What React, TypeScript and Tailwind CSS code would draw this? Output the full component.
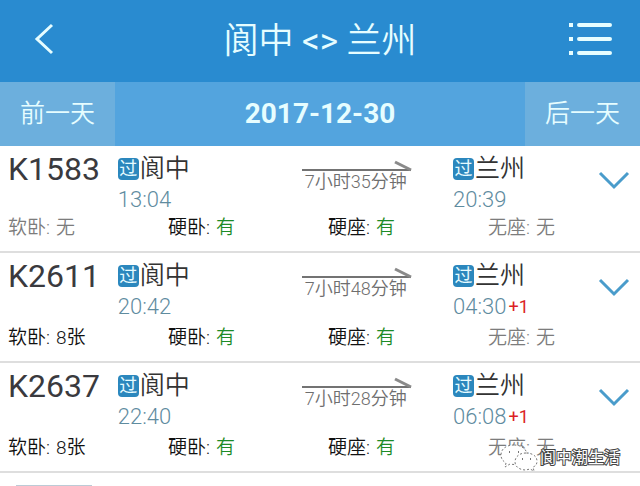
import { useState } from "react";

type Seat = {
  label: string;
  value: string;
  status: "none" | "many" | "few";
};

type Train = {
  code: string;
  depart: string;
  arrive: string;
  nextDay?: boolean;
  duration: string;
  seats: Seat[];
};

const trains: Train[] = [
  {
    code: "K1583",
    depart: "13:04",
    arrive: "20:39",
    duration: "7小时35分钟",
    seats: [
      { label: "软卧", value: "无", status: "none" },
      { label: "硬卧", value: "有", status: "many" },
      { label: "硬座", value: "有", status: "many" },
      { label: "无座", value: "无", status: "none" },
    ],
  },
  {
    code: "K2611",
    depart: "20:42",
    arrive: "04:30",
    nextDay: true,
    duration: "7小时48分钟",
    seats: [
      { label: "软卧", value: "8张", status: "few" },
      { label: "硬卧", value: "有", status: "many" },
      { label: "硬座", value: "有", status: "many" },
      { label: "无座", value: "无", status: "none" },
    ],
  },
  {
    code: "K2637",
    depart: "22:40",
    arrive: "06:08",
    nextDay: true,
    duration: "7小时28分钟",
    seats: [
      { label: "软卧", value: "8张", status: "few" },
      { label: "硬卧", value: "有", status: "many" },
      { label: "硬座", value: "有", status: "many" },
      { label: "无座", value: "无", status: "none" },
    ],
  },
];

function Station({ name, time, nextDay }: { name: string; time: string; nextDay?: boolean }) {
  return (
    <div className="pt-0.5">
      <div className="flex items-center gap-px">
        <span className="flex h-[22px] w-[21px] items-center justify-center rounded-sm bg-[#2b87bd] text-[18px] leading-none text-[#e6fbff]">
          过
        </span>
        <span className="text-[25px] leading-8 font-[350] text-[#333]">{name}</span>
      </div>
      <div className="mt-0.5 flex items-center gap-0.5 leading-[26px]">
        <span className="text-[22px] font-light text-[#5f8c9f]">{time}</span>
        {nextDay && <span className="text-[18px] text-[#dc1f26]">+1</span>}
      </div>
    </div>
  );
}

function TrainRow({ train }: { train: Train }) {
  const [open, setOpen] = useState(false);

  return (
    <li className="group border-b-2 border-[#dedede] pt-[5px] pb-[9px]">
      <div className="grid grid-cols-[18.4%_28.6%_23.8%_21%_1fr] items-start">
        <h2 className="pl-2 text-[32px] leading-9 text-[#3a3a3e]">{train.code}</h2>
        <Station name="阆中" time={train.depart} />
        <div className="flex flex-col pt-[9px]">
          <svg viewBox="0 0 112 12" className="w-28" fill="none" stroke="#737373" strokeWidth="2">
            <path d="M1 10H110" />
            <path d="M94 2L110 10" stroke="#8a8a8a" strokeWidth="3" />
          </svg>
          <span className="pl-1 text-[18px] leading-5 font-[350] text-[#6e6e6e]">{train.duration}</span>
        </div>
        <Station name="兰州" time={train.arrive} nextDay={train.nextDay} />
        <button
          type="button"
          aria-label={train.code}
          aria-expanded={open}
          onClick={() => setOpen(!open)}
          className="flex justify-center pt-5"
        >
          <svg viewBox="0 0 32 20" className="w-8" fill="none" stroke="#4a9ccb" strokeWidth="3">
            <path d="M2 2L16 16L30 2" />
          </svg>
        </button>
      </div>
      <dl className="mt-1 grid grid-cols-4 text-[19px] leading-7 font-[350] group-first:mt-px">
        {train.seats.map((seat) => (
          <div
            key={seat.label}
            className={seat.status === "none" ? "flex gap-1.5 pl-2 text-[#7c7c7c]" : "flex gap-1.5 pl-2 text-[#111]"}
          >
            <dt>{seat.label}:</dt>
            <dd className={seat.status === "many" ? "text-[#1d8c28]" : ""}>{seat.value}</dd>
          </div>
        ))}
      </dl>
    </li>
  );
}

export default function App() {
  return (
    <div className="relative min-h-screen overflow-hidden bg-white font-[Roboto,'Noto_Sans_CJK_SC',sans-serif]">
      {/* Title bar */}
      <header className="flex h-[82px] items-center justify-between bg-[#298bd0] px-7 text-[#e6fdff]">
        <button type="button" aria-label="返回" className="w-11 pb-1 pl-1.5">
          <svg viewBox="0 0 20 32" className="w-5" fill="none" stroke="currentColor" strokeWidth="3">
            <path d="M18 2L3 16L18 30" />
          </svg>
        </button>
        <h1 className="text-[35px] leading-none font-[350]">
          阆中 <span className="font-normal">&lt;&gt;</span> 兰州
        </h1>
        <button type="button" aria-label="菜单" className="pb-1">
          <svg viewBox="0 0 44 34" className="w-11" fill="currentColor">
            <path d="M1 1h4v4H1zM1 15h4v4H1zM1 29h4v4H1z" />
            <path d="M11 3H42M11 17H42M11 31H42" stroke="currentColor" strokeWidth="4" strokeLinecap="round" />
          </svg>
        </button>
      </header>

      {/* Date switcher */}
      <nav className="grid h-16 grid-cols-[18%_1fr_18%] bg-[#53a4de] text-center text-[#e6fdff]">
        <button type="button" className="bg-[#6cafdd] text-[25px] font-[350]">前一天</button>
        <button type="button" className="text-[28px] font-bold">2017-12-30</button>
        <button type="button" className="bg-[#6cafdd] text-[25px] font-[350]">后一天</button>
      </nav>

      <ul>
        {trains.map((train) => (
          <TrainRow key={train.code} train={train} />
        ))}
      </ul>

      {/* Top edge of the next card */}
      <div className="mt-3 ml-4 h-px w-[76px] bg-[#bccbd6]" />

      {/* Account watermark */}
      <div className="absolute right-5 bottom-3.5 flex items-center">
        <svg viewBox="0 0 40 28" className="w-10" fill="#fff" stroke="#777" strokeWidth="1" strokeDasharray="2 2">
          <path d="M14 1C6 1 1 5 1 11c0 4 2 6 5 8l-1 4 5-3c10 2 17-2 17-9C27 5 21 1 14 1z" />
          <path d="M26 9c-7 0-11 4-11 9s5 8 11 8l4-1 4 2-1-4c3-1 4-3 4-6 0-5-5-8-11-8z" />
          <path d="M9 8h1M18 8h1M22 15h1M30 15h1" strokeWidth="2" strokeDasharray="none" />
        </svg>
        <span className="text-base leading-6 text-white [-webkit-text-stroke:2px_#444] [paint-order:stroke_fill]">
          阆中潮生活
        </span>
      </div>
    </div>
  );
}
